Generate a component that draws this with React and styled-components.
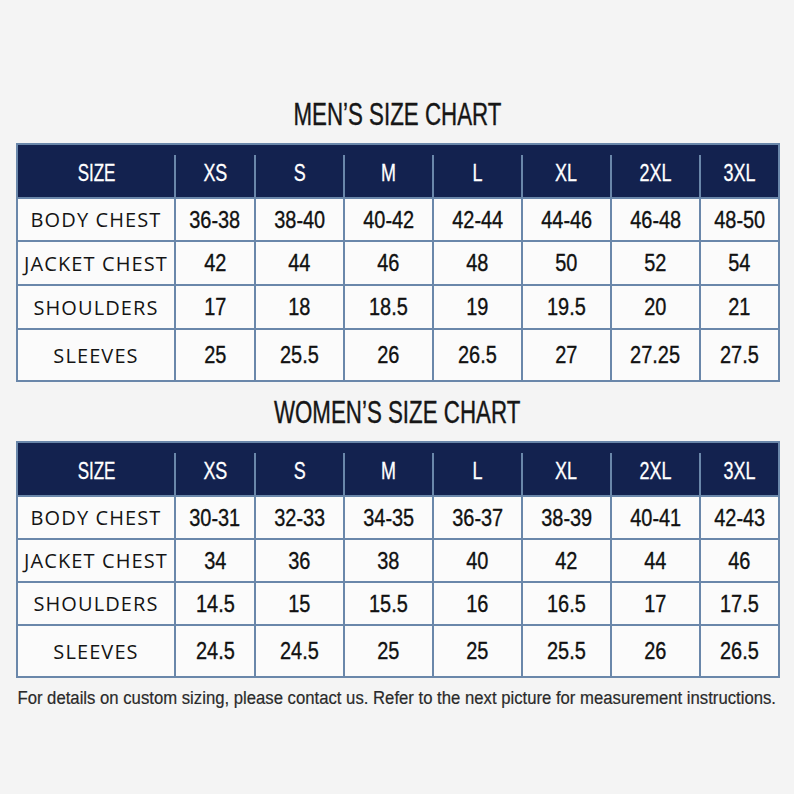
import React from 'react';
import styled, { createGlobalStyle } from 'styled-components';

const GlobalStyle = createGlobalStyle`
  html, body {
    margin: 0;
    padding: 0;
    background: #f4f4f4;
  }
  #root {
    width: 794px;
    height: 794px;
    overflow: hidden;
  }
`;

const Page = styled.div`
  width: 794px;
  height: 794px;
  background: #f4f4f4;
  display: flex;
  flex-direction: column;
  padding-top: 99px;
  box-sizing: border-box;
`;

const Title = styled.h2`
  display: flex;
  justify-content: center;
  margin: ${({ $top }) => $top || 0}px 0 13px;
  font-family: 'Liberation Sans Narrow', 'Liberation Sans', sans-serif;
  font-weight: 400;
  font-size: 31px;
  line-height: 31px;
  color: #161616;
  -webkit-text-stroke: 0.4px #161616;
`;

const Table = styled.table`
  width: 762px;
  margin: 0 0 0 16px;
  border-collapse: collapse;
  table-layout: fixed;
  border: 2px solid #6a87aa;
  background: #fbfbfb;
`;

const HeadCell = styled.th`
  position: relative;
  height: 47px;
  padding: 5px 0 0;
  background: #13224f;
  color: #ffffff;
  font-family: 'Liberation Sans Narrow', 'Liberation Sans', sans-serif;
  font-weight: 400;
  font-size: 23px;
  text-align: center;
  -webkit-text-stroke: 0.3px #ffffff;

  &:not(:first-child)::before {
    content: '';
    position: absolute;
    left: -1px;
    top: 10px;
    bottom: 0;
    width: 2px;
    background: #6a87aa;
  }
`;

const Row = styled.tr`
  height: ${({ $h }) => $h}px;
`;

const LabelCell = styled.td`
  padding: 0;
  border: 2px solid #6a87aa;
  text-align: center;
  font-family: 'Open Sans', sans-serif;
  font-size: 20px;
  letter-spacing: 1.1px;
  color: #141414;
  white-space: nowrap;
`;

const ValueCell = styled.td`
  padding: 0;
  border: 2px solid #6a87aa;
  text-align: center;
  font-family: 'Liberation Sans Narrow', 'Liberation Sans', sans-serif;
  font-size: 24px;
  color: #111111;
  -webkit-text-stroke: 0.35px #111111;
`;

const Narrow = styled.span`
  display: inline-block;
  flex-shrink: 0;
  transform: scaleX(${({ $sx }) => $sx || 1});
`;

const Note = styled.p`
  display: flex;
  justify-content: center;
  margin: 11px 0 0;
  font-family: 'Liberation Sans Narrow', 'Liberation Sans', sans-serif;
  font-size: 18px;
  line-height: 18px;
  color: #2a2a2a;
  white-space: nowrap;
  -webkit-text-stroke: 0.2px #2a2a2a;
`;

const sizes = ['XS', 'S', 'M', 'L', 'XL', '2XL', '3XL'];
const colWidths = [158, 80, 89, 89, 89, 89, 89, 79];

const men = [
  ['BODY CHEST', '36-38', '38-40', '40-42', '42-44', '44-46', '46-48', '48-50'],
  ['JACKET CHEST', '42', '44', '46', '48', '50', '52', '54'],
  ['SHOULDERS', '17', '18', '18.5', '19', '19.5', '20', '21'],
  ['SLEEVES', '25', '25.5', '26', '26.5', '27', '27.25', '27.5'],
];

const women = [
  ['BODY CHEST', '30-31', '32-33', '34-35', '36-37', '38-39', '40-41', '42-43'],
  ['JACKET CHEST', '34', '36', '38', '40', '42', '44', '46'],
  ['SHOULDERS', '14.5', '15', '15.5', '16', '16.5', '17', '17.5'],
  ['SLEEVES', '24.5', '24.5', '25', '25', '25.5', '26', '26.5'],
];

function SizeTable({ rows, heights }) {
  return (
    <Table>
      <colgroup>
        {colWidths.map((w, i) => (
          <col key={i} style={{ width: w }} />
        ))}
      </colgroup>
      <thead>
        <tr>
          <HeadCell><Narrow $sx={0.74}>SIZE</Narrow></HeadCell>
          {sizes.map((s) => (
            <HeadCell key={s}><Narrow $sx={0.78}>{s}</Narrow></HeadCell>
          ))}
        </tr>
      </thead>
      <tbody>
        {rows.map((r, i) => (
          <Row key={r[0]} $h={heights[i]}>
            <LabelCell>{r[0]}</LabelCell>
            {r.slice(1).map((v, j) => (
              <ValueCell key={j}><Narrow $sx={0.83}>{v}</Narrow></ValueCell>
            ))}
          </Row>
        ))}
      </tbody>
    </Table>
  );
}

export default function App() {
  return (
    <Page>
      <GlobalStyle />
      <Title><Narrow $sx={0.72}>MEN’S SIZE CHART</Narrow></Title>
      <SizeTable rows={men} heights={[43, 44, 44, 52]} />
      <Title $top={15}><Narrow $sx={0.72}>WOMEN’S SIZE CHART</Narrow></Title>
      <SizeTable rows={women} heights={[43, 43, 43, 52]} />
      <Note>
        <Narrow $sx={0.928}>
          For details on custom sizing, please contact us. Refer to the next picture for measurement instructions.
        </Narrow>
      </Note>
    </Page>
  );
}
